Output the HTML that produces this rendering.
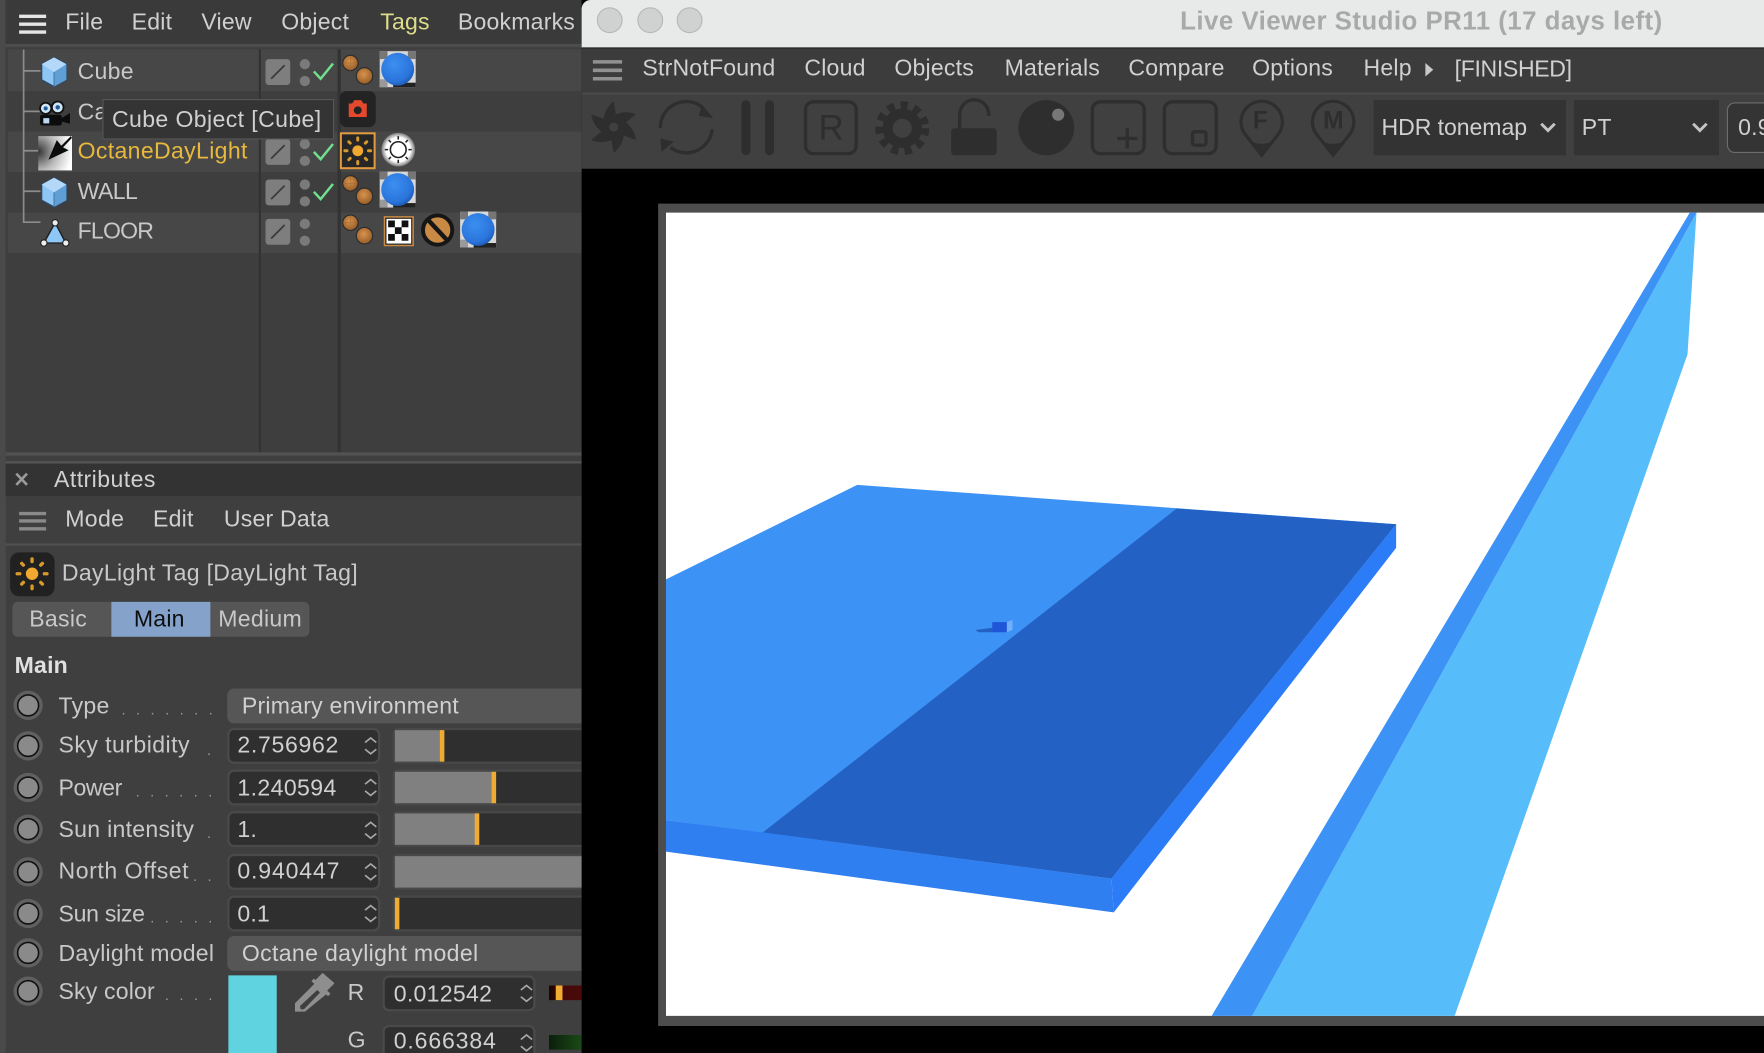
<!DOCTYPE html>
<html><head><meta charset="utf-8"><title>Live Viewer Studio</title>
<style>
html,body{margin:0;padding:0;width:1764px;height:1052px;overflow:hidden;background:#000}
#r{position:absolute;left:0;top:0;width:1568px;height:936px;transform:scale(1.125);transform-origin:0 0;overflow:hidden;background:#3e3e3e;font-family:"Liberation Sans",sans-serif;color:#d0d0d0;font-size:20.5px}
#r div{position:absolute;box-sizing:border-box}
.t{position:absolute;white-space:nowrap;line-height:24px;height:24px;letter-spacing:.18px;margin-top:.8px}
svg{position:absolute;left:0;top:0}
.l{color:#c8c8c8;letter-spacing:.25px}
.i{left:202px;width:136px;height:32px;background:#2f2f2f;border:2px solid #4a4a4a;border-radius:6px}
.tr{left:349px;width:168px;height:32px;background:#2f2f2f;border:2px solid #484848;border-radius:5px 0 0 5px;border-right:0}
.f{top:0;bottom:0;left:0;background:#808080}
.m{top:0;bottom:0;background:#f0ab32;width:4px}
.dd{left:202px;width:315px;height:31px;background:#565656;border-radius:6px 0 0 6px}
#r .dots{color:#9a9a9a;letter-spacing:9.3px;font-size:13px}
</style></head><body><div id="r">

<!-- left panel -->
<div style="left:0;top:0;width:517px;height:936px;background:#3f3f3f"></div>
<div style="left:0;top:0;width:5px;height:936px;background:#4a4a4a"></div>
<div style="left:5px;top:0;width:512px;height:39px;background:#3a3a3a"></div>
<div style="left:5px;top:39px;width:512px;height:3px;background:#4c4c4c"></div>
<div style="left:5px;top:44px;width:512px;height:360px;background:#3e3e3e"></div>
<div style="left:7px;top:44px;width:510px;height:37px;background:#474747"></div>
<div style="left:7px;top:117px;width:510px;height:36px;background:#474747"></div>
<div style="left:7px;top:188.5px;width:510px;height:36px;background:#474747"></div>
<div style="left:229.5px;top:44px;width:2px;height:360px;background:#333"></div>
<div style="left:299.5px;top:44px;width:3px;height:360px;background:#333"></div>
<div style="left:5px;top:402px;width:512px;height:3px;background:#515151"></div>
<div style="left:5px;top:410px;width:512px;height:2px;background:#555"></div>
<div style="left:5px;top:412px;width:512px;height:29px;background:#333"></div>
<div style="left:5px;top:483px;width:512px;height:2px;background:#505050"></div>

<div style="left:11px;top:535px;width:264px;height:31px;background:#565656;border-radius:5px"></div>
<div style="left:99px;top:535px;width:88px;height:31px;background:#85a2cb"></div>

<div class="dd" style="top:612px"></div>
<div class="dd" style="top:832px"></div>

<div class="i" style="top:647px"></div><div class="tr" style="top:647px"><div class="f" style="width:42px"></div><div class="m" style="left:40px"></div></div>
<div class="i" style="top:684px"></div><div class="tr" style="top:684px"><div class="f" style="width:87px"></div><div class="m" style="left:86px"></div></div>
<div class="i" style="top:721px"></div><div class="tr" style="top:721px"><div class="f" style="width:72px"></div><div class="m" style="left:71px"></div></div>
<div class="i" style="top:759px"></div><div class="tr" style="top:759px"><div class="f" style="width:168px"></div></div>
<div class="i" style="top:796px"></div><div class="tr" style="top:796px"><div class="m" style="left:0"></div></div>

<div style="left:203px;top:867px;width:43px;height:69px;background:#60d3e0"></div>
<div class="i" style="left:340px;top:867px;height:32px"></div>
<div class="i" style="left:340px;top:911px;height:32px"></div>
<div style="left:488px;top:876px;width:29px;height:13px;background:linear-gradient(90deg,#1a0404,#450808 40%,#4a0a0a)"></div>
<div style="left:494px;top:876px;width:6px;height:13px;background:#f0ab32"></div>
<div style="left:488px;top:920px;width:29px;height:13px;background:linear-gradient(90deg,#0b1f0b,#1a4a16)"></div>

<!-- right window -->
<div style="left:517px;top:0;width:1051px;height:936px;background:#000"></div>
<div style="left:517px;top:0;width:1051px;height:43px;background:#e8eaea;border-top-left-radius:8px;border-bottom:1.5px solid #222"></div>
<div style="left:517px;top:43px;width:1051px;height:39px;background:#3c3c3c"></div>
<div style="left:517px;top:82px;width:1051px;height:2px;background:#4c4c4c"></div>
<div style="left:517px;top:84px;width:1051px;height:66px;background:#404040"></div>
<div style="left:1221px;top:89px;width:171px;height:49px;background:#333"></div>
<div style="left:1399px;top:89px;width:129px;height:49px;background:#333"></div>
<div style="left:1535px;top:91px;width:60px;height:45px;background:#343434;border:1.5px solid #6c6c6c;border-radius:7px"></div>
<div style="left:585px;top:181px;width:983px;height:731px;background:#4d4d4d"></div>
<div style="left:592px;top:189px;width:976px;height:714px;background:#fff"></div>

<svg width="1568" height="936" viewBox="0 0 1568 936">
<defs>
<radialGradient id="bl" cx=".4" cy=".35" r=".75"><stop offset="0" stop-color="#3b8ff0"/><stop offset=".7" stop-color="#2a74dc"/><stop offset="1" stop-color="#174f9e"/></radialGradient>
<radialGradient id="br" cx=".45" cy=".4" r=".7"><stop offset="0" stop-color="#d8934c"/><stop offset="1" stop-color="#8a5423"/></radialGradient>
<radialGradient id="wh" cx=".5" cy=".5" r=".5"><stop offset=".72" stop-color="#fff"/><stop offset="1" stop-color="#777"/></radialGradient>
<radialGradient id="dg" cx="0" cy=".45" r="1"><stop offset="0" stop-color="#333"/><stop offset=".55" stop-color="#bbb"/><stop offset="1" stop-color="#fff"/></radialGradient>
<g id="cube"><path d="M0-13 11-7V7L0 13-11 7V-7Z" fill="#8ec6f5" stroke="#2c4a66" stroke-width="1.2"/><path d="M0 0 11-7V7L0 13Z" fill="#5f9fd6"/><path d="M0-13 11-7 0 0-11-7Z" fill="#b4d8f8"/><path d="M0 0V13" stroke="#3e6f9a" stroke-width=".8"/></g>
<g id="ph"><circle cx="0" cy="0" r="6.8" fill="url(#br)" stroke="#2a2a2a" stroke-width="1"/><path d="M-6.5 0H6.5M0-6.5V6.5" stroke="#a56a30" stroke-width=".5"/><circle cx="12.5" cy="11.5" r="7.3" fill="url(#br)" stroke="#2a2a2a" stroke-width="1"/></g>
<g id="ball"><rect x="-16" y="-16" width="32" height="32" fill="#d8d8d8"/><rect x="-16" y="-16" width="7" height="7" fill="#777"/><rect x="9" y="-16" width="7" height="7" fill="#777"/><rect x="-16" y="9" width="7" height="7" fill="#999"/><rect x="-4" y="12" width="20" height="4" fill="#222"/><circle r="14.6" fill="url(#bl)"/></g>
<g id="pen"><rect x="-11" y="-11.5" width="22" height="23" rx="3" fill="#7e7e7e"/><path d="M-6 6 6-6" stroke="#3a3a3a" stroke-width="1.6"/></g>
<g id="dots"><circle cx="0" cy="-7.5" r="4.6" fill="#7a7a7a"/><circle cx="0" cy="7.5" r="4.6" fill="#7a7a7a"/></g>
<path id="chk" d="M-9 0-3 6.500 8-7" fill="none" stroke="#6fe08d" stroke-width="2.200"/>
<g id="rad"><circle r="13" fill="#606060" cy="0"/><circle r="9.3" fill="#8a8a8a" stroke="#111" stroke-width="1.4"/></g>
<g id="spin" fill="none" stroke="#a8a8a8" stroke-width="1.5"><path d="M-5-3 0-7 5-3M-5 3 0 7 5 3"/></g>
<g id="sun"><circle r="4.800" fill="#f0a830"/><g stroke="#d99a2c" stroke-width="2.600" stroke-linecap="round"><path d="M0-11.500V-9.500M0 9.500V11.500M-11.500 0H-9.500M9.500 0H11.500M-8-8-6.700-6.700M6.700 6.700 8 8M-8 8-6.700 6.700M6.700-6.700 8-8"/></g></g>
<g id="pin"><path d="M-14.400 11.400A18.400 18.400 0 1 1 14.400 11.400L0 29.600Z" fill="none" stroke="#2e2e2e" stroke-width="2.800"/><path d="M-8 18Q0 21 8 18L0 29.600Z" fill="#2e2e2e"/></g>
<path id="bld" d="M0-23C1-17 2-13 2-8L-9-5C-9-12-6-18 0-23Z" fill="#2e2e2e"/>
</defs>

<!-- hamburger -->
<path d="M17 14.5H41M17 21.5H41M17 28.5H41" stroke="#e6e6e6" stroke-width="3"/>
<path d="M17 456.5H41M17 463H41M17 470H41" stroke="#8a8a8a" stroke-width="3"/>
<path d="M527 55H553M527 62.5H553M527 70H553" stroke="#919191" stroke-width="3.2"/>

<!-- tree -->
<path d="M21 44V197.5H36M21 63H36M21 99H36M21 134H36M21 170H36" fill="none" stroke="#8c8c8c" stroke-width="1.5"/>
<use href="#cube" x="48" y="64"/><use href="#cube" x="48" y="171"/>

<!-- camera icon -->
<g><circle cx="40.600" cy="96.300" r="5" fill="#cfe4f5" stroke="#111" stroke-width="1.600"/><circle cx="40.600" cy="96.300" r="1.800" fill="#1f5a96"/><circle cx="51.300" cy="95.400" r="5.200" fill="#cfe4f5" stroke="#111" stroke-width="1.600"/><circle cx="51.300" cy="95.400" r="2" fill="#1f5a96"/><rect x="35.500" y="102" width="19.500" height="9.500" rx="2" fill="#0c0c0c"/><path d="M54.800 105 62.200 100.400V110L54.800 108Z" fill="#0c0c0c"/><rect x="38.500" y="105" width="5.300" height="4.700" fill="#b9d8f5"/></g>

<!-- daylight icon -->
<rect x="34" y="121" width="30" height="30.500" fill="url(#dg)"/>
<path d="M43 142 50.500 124.500 54.500 129.500 63 121 64 122.500 56 131 61 133.500Z" fill="#0b0b0b"/>

<!-- floor icon -->
<path d="M49 198 39 216H58.500Z" fill="#8ec6f5" stroke="#1e1e1e" stroke-width="1.200"/><circle cx="49" cy="198" r="2.800" fill="#eee" stroke="#222"/><circle cx="39" cy="216" r="2.800" fill="#eee" stroke="#222"/><circle cx="58.500" cy="216" r="2.800" fill="#eee" stroke="#222"/>

<!-- row controls -->
<use href="#pen" x="247" y="64"/><use href="#pen" x="247" y="135"/><use href="#pen" x="247" y="171"/><use href="#pen" x="247" y="206"/>
<use href="#dots" x="271" y="64.5"/><use href="#dots" x="271" y="135.5"/><use href="#dots" x="271" y="171.5"/><use href="#dots" x="271" y="206.5"/>
<use href="#chk" x="288" y="63.5"/><use href="#chk" x="288" y="135"/><use href="#chk" x="288" y="170.5"/>

<!-- tags -->
<use href="#ph" x="311.5" y="56"/><use href="#ph" x="311.5" y="163"/><use href="#ph" x="311.5" y="198"/>
<use href="#ball" x="353.5" y="61.500"/><use href="#ball" x="353.5" y="168.500"/><use href="#ball" x="425" y="204"/>

<rect x="302" y="81" width="32" height="32" rx="6" fill="#232323"/>
<path d="M310 92H313L315 89H321L323 92H326V104H310Z" fill="#e4482d"/><circle cx="318" cy="98" r="3.5" fill="#232323"/>

<rect x="303" y="118.500" width="30" height="31" fill="#262626" stroke="#e39a3e" stroke-width="1.800"/>
<use href="#sun" x="318" y="134"/>
<circle cx="354" cy="133" r="15" fill="url(#wh)"/><circle cx="354" cy="133" r="7" fill="none" stroke="#222" stroke-width="1.4"/><g stroke="#222" stroke-width="1.4"><path d="M354 121V124M354 142V145M342 133H345M363 133H366M345.500 124.500 347.500 126.500M360.500 139.500 362.500 141.500M345.500 141.500 347.500 139.500M360.500 126.500 362.500 124.500"/></g>

<rect x="342" y="193" width="25" height="25" fill="#fff" stroke="#c98a45" stroke-width="1.800"/><rect x="343" y="194" width="23" height="23" fill="none" stroke="#1c1c1c"/>
<g fill="#111"><rect x="345" y="196" width="6" height="6"/><rect x="357" y="196" width="6" height="6"/><rect x="351" y="202" width="6" height="6"/><rect x="345" y="208" width="6" height="6"/><rect x="357" y="208" width="6" height="6"/></g>
<circle cx="389" cy="204.500" r="13" fill="#c98a45" stroke="#161616" stroke-width="3.5"/><path d="M381 196 397 213" stroke="#161616" stroke-width="4"/>

<!-- attribute sun icon -->
<rect x="9" y="491" width="39.500" height="39" rx="8" fill="#212121"/><use href="#sun" transform="translate(28.500 510) scale(1.150)"/>

<!-- radios -->
<use href="#rad" x="25" y="627"/><use href="#rad" x="25" y="663"/><use href="#rad" x="25" y="700"/><use href="#rad" x="25" y="737"/><use href="#rad" x="25" y="775"/><use href="#rad" x="25" y="812"/><use href="#rad" x="25" y="847"/><use href="#rad" x="25" y="881"/>
<!-- spinners -->
<use href="#spin" x="329.500" y="663"/><use href="#spin" x="329.500" y="700"/><use href="#spin" x="329.500" y="738"/><use href="#spin" x="329.500" y="775"/><use href="#spin" x="329.500" y="812"/><use href="#spin" x="468" y="883"/><use href="#spin" x="468" y="927"/>

<!-- X -->
<path d="M14.500 421 24 431M24 421 14.500 431" stroke="#9a9a9a" stroke-width="2.400"/>

<!-- eyedropper -->
<path fill-rule="evenodd" d="M262.200 891.800 280 874 290.300 883.500 271.100 899.200H262.200ZM266.700 894.200 267.200 897.100H270.200L284.400 882.300 282 880Z" fill="#8e8e8e"/>
<path d="M277.900 871 292.700 884.400" stroke="#8e8e8e" stroke-width="3.200"/>
<path d="M286.800 865.800 296.300 874 288.900 881.400 279.400 873.200Z" fill="#8e8e8e" stroke="#8e8e8e" stroke-width="1.500" stroke-linejoin="round"/>

<!-- window traffic lights -->
<circle cx="542" cy="18" r="11" fill="#d0d2d2" stroke="#b6b8b8"/><circle cx="578" cy="18" r="11" fill="#d0d2d2" stroke="#b6b8b8"/><circle cx="613" cy="18" r="11" fill="#d0d2d2" stroke="#b6b8b8"/>

<!-- help arrow -->
<path d="M1267 56 1274 62 1267 68Z" fill="#c9c9c9"/>

<!-- toolbar icons -->
<g fill="#2e2e2e" stroke="#2e2e2e">
<!-- octane -->
<g stroke="none" transform="translate(545.500 113)"><use href="#bld"/><use href="#bld" transform="rotate(60)"/><use href="#bld" transform="rotate(120)"/><use href="#bld" transform="rotate(180)"/><use href="#bld" transform="rotate(240)"/><use href="#bld" transform="rotate(300)"/><circle r="9.500"/><circle r="4" fill="#404040"/></g>
<!-- refresh -->
<g fill="none" stroke-width="3" transform="translate(610 113)"><path d="M-23 1A23 23 0 0 1 14-18"/><path d="M23 2A23 23 0 0 1-14 18"/></g>
<g stroke="none" transform="translate(610 113)"><path d="M14-20 24-8 11-10Z"/><path d="M-23 10-11 13-22 22Z"/></g>
<!-- pause -->
<rect x="659" y="89" width="8" height="49" rx="4" stroke="none"/><rect x="680" y="89" width="8" height="49" rx="4" stroke="none"/>
<!-- R box -->
<rect x="716" y="90.500" width="45" height="46" rx="7" fill="none" stroke-width="3"/>
<!-- gear -->
<circle cx="802" cy="114" r="19.500" fill="none" stroke-width="9" stroke-dasharray="6 5.300"/><circle cx="802" cy="114" r="13" fill="none" stroke-width="9"/>
<!-- lock -->
<rect x="845.500" y="114" width="40.500" height="24" rx="3" stroke="none"/><path d="M853 114V103C853 84 879 84 879 103" fill="none" stroke-width="3"/>
<!-- ball -->
<ellipse cx="930" cy="113.500" rx="24.800" ry="24.500" stroke="none"/><circle cx="940.600" cy="102" r="5.400" fill="#777" stroke="none"/>
<!-- plus box -->
<rect x="971" y="90.500" width="46" height="46" rx="7" fill="none" stroke-width="3"/><path d="M1002 114V132M993 123H1011" fill="none" stroke-width="3"/>
<!-- square box -->
<rect x="1035" y="90.500" width="46" height="46" rx="7" fill="none" stroke-width="3"/><rect x="1060" y="117" width="12" height="12" rx="2" fill="none" stroke-width="3"/>
</g>
<use href="#pin" x="1121.500" y="108.400"/><use href="#pin" x="1185" y="108.400"/>

<!-- dropdown chevrons -->
<path d="M1370 110 1376 116 1382 110M1505 110 1511 116 1517 110" fill="none" stroke="#c4c4c4" stroke-width="2.600"/>

<!-- 3D scene -->
<g>
<path d="M592 515 762 431 1241 466 988 781 592 729Z" fill="#3c92f5"/>
<path d="M1046 452 1241 466 988 781 678 740Z" fill="#2461c4"/>
<path d="M592 729 678 740 988 781 990 811 592 757Z" fill="#2f7ff0"/>
<path d="M1241 466V487L990 811 988 781Z" fill="#2c7cf8"/>
<path d="M867 560 882 558 882 562 870 562Z" fill="#2461c4"/>
<path d="M882 553H895V562H882Z" fill="#1f55d8"/><path d="M895 553 900 551V560L895 562Z" fill="#6fb0f8"/>
<path d="M1508 189 1500 315 1293 903H1113Z" fill="#56bdfa"/>
<path d="M1502 189H1508L1113 903H1077Z" fill="#3c92f5"/>
</g>
</svg>

<!-- Text: left menu -->
<div class="t" style="left:58px;top:7px">File</div>
<div class="t" style="left:117px;top:7px">Edit</div>
<div class="t" style="left:179px;top:7px">View</div>
<div class="t" style="left:250px;top:7px">Object</div>
<div class="t" style="left:338px;top:7px;color:#dcdc8c">Tags</div>
<div class="t" style="left:407px;top:7px">Bookmarks</div>

<div class="t l" style="left:69px;top:51px">Cube</div>
<div class="t l" style="left:69px;top:87px">Ca</div>
<div class="t" style="left:69px;top:122px;color:#e8b93c;letter-spacing:.3px">OctaneDayLight</div>
<div class="t l" style="left:69px;top:158px;letter-spacing:-.5px">WALL</div>
<div class="t l" style="left:69px;top:193.500px;letter-spacing:-.7px">FLOOR</div>

<div style="left:91px;top:88px;width:206px;height:36px;background:#343434;border:1.500px solid #565656"></div>
<div class="t" style="left:99.500px;top:94px;letter-spacing:.35px">Cube Object [Cube]</div>

<div class="t" style="left:48px;top:414px;letter-spacing:.4px">Attributes</div>
<div class="t" style="left:58px;top:449.500px;letter-spacing:.3px">Mode</div>
<div class="t" style="left:136px;top:449.500px">Edit</div>
<div class="t" style="left:199px;top:449.500px">User Data</div>
<div class="t l" style="left:55px;top:497.500px;letter-spacing:.28px">DayLight Tag [DayLight Tag]</div>
<div class="t l" style="left:26px;top:538px">Basic</div>
<div class="t" style="left:119px;top:538px;color:#0e0e0e">Main</div>
<div class="t l" style="left:194px;top:538px">Medium</div>
<div class="t" style="left:13px;top:579px;font-weight:bold;color:#e0e0e0">Main</div>

<div class="t l" style="left:52px;top:615px">Type</div><div class="t dots" style="left:108px;top:618.500px">.......</div>
<div class="t" style="left:215px;top:615px;letter-spacing:.2px">Primary environment</div>
<div class="t l" style="left:52px;top:650.500px;letter-spacing:.4px">Sky turbidity</div><div class="t dots" style="left:184px;top:654px">.</div>
<div class="t" style="left:211px;top:650.500px;letter-spacing:.6px">2.756962</div>
<div class="t l" style="left:52px;top:688px;letter-spacing:-.35px">Power</div><div class="t dots" style="left:120.500px;top:691.500px">......</div>
<div class="t" style="left:211px;top:688px;letter-spacing:.35px">1.240594</div>
<div class="t l" style="left:52px;top:725px">Sun intensity</div><div class="t dots" style="left:184px;top:728.500px">.</div>
<div class="t" style="left:211px;top:725px">1.</div>
<div class="t l" style="left:52px;top:762.500px;letter-spacing:.5px">North Offset</div><div class="t dots" style="left:171.500px;top:766px">..</div>
<div class="t" style="left:211px;top:762.500px;letter-spacing:.75px">0.940447</div>
<div class="t l" style="left:52px;top:800px;letter-spacing:-.25px">Sun size</div><div class="t dots" style="left:133.500px;top:803.500px">.....</div>
<div class="t" style="left:211px;top:800px">0.1</div>
<div class="t l" style="left:52px;top:835px;letter-spacing:.2px">Daylight model</div>
<div class="t" style="left:215px;top:835px;letter-spacing:.3px">Octane daylight model</div>
<div class="t l" style="left:52px;top:869px;letter-spacing:.15px">Sky color</div><div class="t dots" style="left:146.500px;top:872.500px">....</div>
<div class="t l" style="left:309px;top:870px">R</div>
<div class="t" style="left:350px;top:871px;letter-spacing:.25px">0.012542</div>
<div class="t l" style="left:309px;top:912px">G</div>
<div class="t" style="left:350px;top:913px;letter-spacing:.75px">0.666384</div>

<!-- Text: window -->
<div class="t" style="left:1049px;top:5px;color:#a8aaaa;font-weight:bold;font-size:23px;letter-spacing:.4px">Live Viewer Studio PR11 (17 days left)</div>
<div class="t" style="left:571px;top:48px">StrNotFound</div>
<div class="t" style="left:715px;top:48px">Cloud</div>
<div class="t" style="left:795px;top:48px">Objects</div>
<div class="t" style="left:893px;top:48px">Materials</div>
<div class="t" style="left:1003px;top:48px">Compare</div>
<div class="t" style="left:1113px;top:48px">Options</div>
<div class="t" style="left:1212px;top:48px">Help</div>
<div class="t" style="left:1293px;top:49.500px;letter-spacing:-.3px">[FINISHED]</div>
<div class="t" style="left:1228px;top:101px;letter-spacing:-.05px">HDR tonemap</div>
<div class="t" style="left:1406px;top:101px">PT</div>
<div class="t" style="left:1545px;top:101px">0.9</div>
<div class="t" style="left:727.500px;top:101px;color:#2e2e2e;font-size:31px">R</div>
<div class="t" style="left:1113.500px;top:94px;color:#2e2e2e;font-weight:bold;font-size:22px">F</div>
<div class="t" style="left:1176px;top:94px;color:#2e2e2e;font-weight:bold;font-size:22px">M</div>
</div></body></html>
